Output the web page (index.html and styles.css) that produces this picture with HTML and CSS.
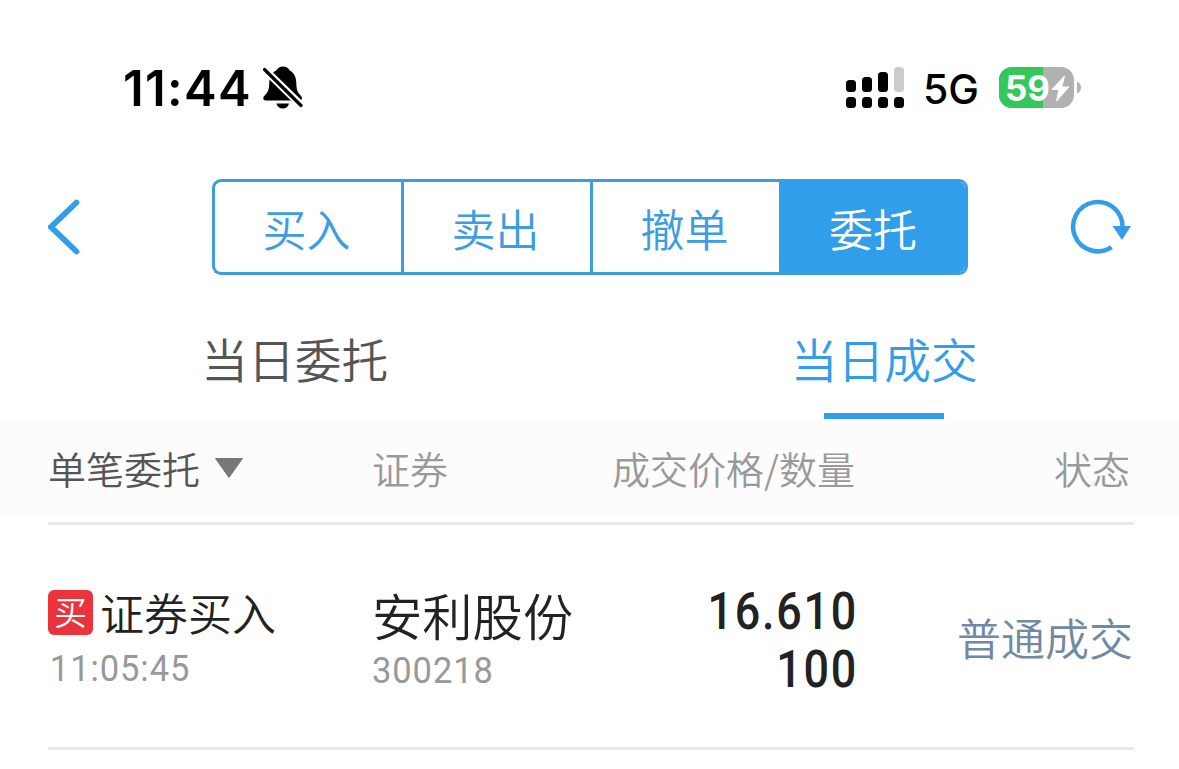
FILE: index.html
```
<!DOCTYPE html>
<html lang="zh-CN">
<head>
    <meta charset="UTF-8">
    <meta name="viewport" content="width=device-width, initial-scale=1.0">
    <title>当日成交</title>
    <link rel="stylesheet" href="styles.css">
</head>
<body>
    <div class="status-bar">
        <span class="clock">11:44</span>
        <svg class="bell" width="40" height="44" viewBox="0 0 40 44">
            <path d="M20 .5c-3 0-5.500 1.500-6.500 3.700C8.500 6.500 6.500 11 6.300 17c-.2 6-1 8.500-3.800 11.500C.8 30.300.3 31.200.3 32.300c0 1.300.9 2.200 2.400 2.200h33.600c1.700 0 2.700-.9 2.700-2.200 0-1.100-.6-2-2.200-3.800-2.600-3-3.300-5.500-3.500-11.500-.2-6-2.200-10.500-6.800-12.800C25.500 2 23 .5 20 .5z"/>
            <path d="M13.500 37.500h12.500c-.7 3.300-3 5-6.200 5s-5.600-1.700-6.300-5z"/>
            <path d="M1.500 3.500l37 36" stroke="#fff" stroke-width="7.500"/>
            <path d="M1.500 3.500l36.500 36" stroke="#000" stroke-width="3.200" stroke-linecap="round"/>
        </svg>
        <svg class="signal" width="58" height="41" viewBox="0 0 58 41">
            <rect x="0" y="13" width="10" height="12" rx="3.500"/>
            <rect x="16" y="10" width="10" height="15" rx="3.500"/>
            <rect x="32" y="5" width="10" height="20" rx="3.500"/>
            <rect x="48" y="0" width="10" height="25" rx="3.500" fill="#ccc"/>
            <rect x="0" y="30" width="10" height="11" rx="3.500"/>
            <rect x="16" y="30" width="10" height="11" rx="3.500"/>
            <rect x="32" y="30" width="10" height="11" rx="3.500"/>
            <rect x="48" y="30" width="10" height="11" rx="3.500"/>
        </svg>
        <span class="network">5G</span>
        <svg class="battery" width="82" height="41" viewBox="0 0 82 41">
            <rect width="75" height="41" rx="13" fill="#b1b1b1"/>
            <path d="M13 0h31v41H13A13 13 0 0 1 0 28V13A13 13 0 0 1 13 0z" fill="#34c759"/>
            <path d="M78 14.500c2.500 1 4 3.300 4 6s-1.500 5-4 6z" fill="#b1b1b1"/>
            <text class="battery-level" x="6" y="33.500">59</text>
            <path d="M65.500 9L53 22.500h7L57.500 34 70 20h-7.200z" fill="#fff" stroke="#fff" stroke-width="1" stroke-linejoin="round"/>
        </svg>
    </div>

    <div class="nav">
        <svg class="back" width="32" height="56" viewBox="0 0 32 56">
            <path d="M28.500 3.500L3 28l25.500 24.500" fill="none" stroke="#329eea" stroke-width="5.800" stroke-linecap="round"/>
        </svg>
        <div class="segment">
            <span class="segment-item">买入</span>
            <span class="segment-item">卖出</span>
            <span class="segment-item">撤单</span>
            <span class="segment-item active">委托</span>
        </div>
        <svg class="refresh" width="61" height="56" viewBox="0 0 61 56">
            <path d="M41.500 48.200A24.700 24.700 0 1 1 52.500 28" fill="none" stroke="#329eea" stroke-width="4.500"/>
            <path d="M42.500 27h18.500l-9 14z" fill="#329eea"/>
        </svg>
    </div>

    <div class="tabs">
        <div class="tab">当日委托</div>
        <div class="tab active">当日成交</div>
    </div>

    <div class="table-head">
        <span class="filter">单笔委托
            <svg width="30" height="20" viewBox="0 0 30 20"><path d="M1.500.5h27L15 19.500z" fill="#777" stroke="#777" stroke-linejoin="round"/></svg>
        </span>
        <span>证券</span>
        <span class="right">成交价格/数量</span>
        <span class="right">状态</span>
    </div>

    <div class="row">
        <div class="trade">
            <div class="trade-type"><span class="badge">买</span>证券买入</div>
            <div class="sub time">11:05:45</div>
        </div>
        <div class="stock">
            <div class="stock-name">安利股份</div>
            <div class="sub">300218</div>
        </div>
        <div class="deal">
            <div>16.610</div>
            <div>100</div>
        </div>
        <div class="state">普通成交</div>
    </div>
</body>
</html>
```
FILE: styles.css
```
* {
    box-sizing: border-box;
}

body {
    margin: 0;
    background: #fff;
    font-family: "Noto Sans CJK SC", sans-serif;
    font-weight: 350;
    color: #222;
    overflow: hidden;
    white-space: nowrap;
}

svg {
    display: block;
    flex: none;
}

/* 状态栏 */
.status-bar {
    display: flex;
    align-items: center;
    height: 179px;
    padding: 0 98px 4px 123px;
    font-family: Inter, sans-serif;
    color: #000;
}

.clock {
    width: 140px;
    padding-top: 2px;
    font-size: 49px;
    font-weight: 600;
    letter-spacing: 1.3px;
}

.signal {
    margin-left: auto;
}

.network {
    width: 59px;
    margin: 3px 17px 0 19px;
    font-size: 41px;
    font-weight: 500;
}

.battery-level {
    font-size: 35px;
    font-weight: 700;
    fill: #fff;
}

/* 顶部导航 */
.nav {
    display: flex;
    align-items: center;
    justify-content: space-between;
    height: 96px;
    padding: 0 48px;
}

.segment {
    display: grid;
    grid-template-columns: 186px 189px 189px 186px;
    height: 96px;
    margin-left: 29px;
    border: 3px solid #3d9de0;
    border-right-color: #309eea;
    border-radius: 9px;
    overflow: hidden;
}

.segment-item {
    padding-right: 2px;
    font-size: 44px;
    line-height: 92px;
    text-align: center;
    color: #3d9de0;
}

.segment-item + .segment-item {
    border-left: 3px solid #3d9de0;
}

.segment .active {
    padding-right: 0;
    background: #309eea;
    color: #fff;
}

.segment-item + .active {
    border-color: #309eea;
}

/* 标签页 */
.tabs {
    display: flex;
    height: 144px;
}

.tab {
    display: flex;
    flex: 1;
    flex-direction: column;
    align-items: center;
    justify-content: space-between;
    padding-top: 48px;
    font-size: 46.7px;
    line-height: 69px;
    color: #555;
}

.tab.active {
    color: #329eea;
}

.tab.active::after {
    content: "";
    width: 120px;
    height: 6px;
    background: #329eea;
}

/* 成交列表 */
.table-head,
.row {
    display: grid;
}

.table-head {
    grid-template-columns: 324px 200px 283px 1fr;
    height: 97px;
    padding: 0 49px 0 48px;
    background: #fcfcfc;
    font-size: 38px;
    line-height: 97px;
    color: #999;
}

.filter {
    display: flex;
    align-items: center;
    gap: 14px;
    color: #555;
}

.right {
    text-align: right;
}

.row {
    grid-template-columns: 324px 200px 286px 1fr;
    height: 228px;
    margin: 6px 45px 0 48px;
    border-top: 3px solid #e8e8e8;
    border-bottom: 3px solid #e8e8e8;
}

.trade {
    padding-top: 62px;
}

.trade-type {
    display: flex;
    align-items: center;
    gap: 7px;
    font-size: 44px;
    line-height: 50px;
}

.badge {
    width: 45px;
    height: 45px;
    border-radius: 6px;
    background: #ea333d;
    font-size: 33px;
    line-height: 43px;
    text-align: center;
    color: #fff;
}

/* 数字用窄体 */
.sub {
    margin-top: 9px;
    font-family: Roboto, sans-serif;
    font-size: 37.5px;
    font-weight: 450;
    line-height: 44px;
    letter-spacing: 1px;
    color: #999;
    transform: scaleX(0.92);
    transform-origin: left;
}

.time {
    padding-left: 2px;
}

.stock {
    padding-top: 59px;
}

.stock-name {
    font-size: 50.3px;
    line-height: 60px;
}

.stock .sub {
    margin-top: 4px;
}

.deal {
    padding-top: 58px;
    font-family: Roboto, sans-serif;
    font-size: 51px;
    font-weight: 500;
    line-height: 58px;
    letter-spacing: 2px;
    text-align: right;
    transform: scaleX(0.88);
    transform-origin: right;
}

.state {
    padding: 87px 1px 0 0;
    font-size: 44px;
    line-height: 50px;
    text-align: right;
    color: #7089a5;
}
```
